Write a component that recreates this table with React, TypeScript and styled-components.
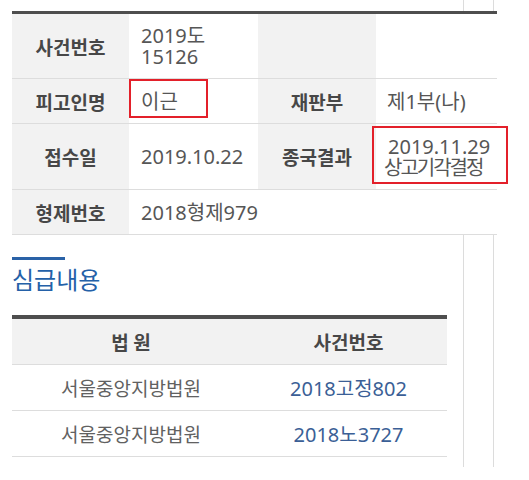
import React from "react";
import styled, { createGlobalStyle } from "styled-components";

const GlobalStyle = createGlobalStyle`
  html, body { margin: 0; padding: 0; background: #ffffff; }
  body {
    font-family: "Noto Sans", "Noto Sans CJK KR", sans-serif;
    color: #555;
  }
`;

const Page = styled.div`
  width: 529px;
  height: 480px;
  overflow: hidden;
  background: #fff;
`;

const TopStrip = styled.div`
  display: flex;
  justify-content: flex-end;
  padding-right: 35px;
  height: 11px;
`;

const SideRail = styled.div<{ $h: number }>`
  width: 29px;
  height: ${(p) => p.$h}px;
  border-left: 1px solid #dcdcdc;
  border-right: 1px solid #dcdcdc;
`;

const InfoTable = styled.div`
  margin: 0 32px 0 12px;
  border-top: 3px solid #4e4e4e;
  display: grid;
  grid-template-columns: 117px 129px 118px 1fr;
`;

const Label = styled.div<{ $h: number }>`
  height: ${(p) => p.$h}px;
  box-sizing: border-box;
  background: #f2f2f2;
  border-bottom: 1px solid #dddddd;
  display: flex;
  align-items: center;
  justify-content: center;
  font-family: "Noto Sans CJK KR", sans-serif;
  font-size: 19px;
  font-weight: 700;
  color: #474747;
`;

const Value = styled.div<{ $h: number; $span?: number; $pad?: number }>`
  position: relative;
  height: ${(p) => p.$h}px;
  box-sizing: border-box;
  background: #fff;
  border-bottom: 1px solid #dddddd;
  display: flex;
  align-items: center;
  padding-left: ${(p) => p.$pad ?? 12}px;
  font-size: 20px;
  line-height: 21px;
  color: #565656;
  white-space: nowrap;
  grid-column: span ${(p) => p.$span ?? 1};
`;

const Lines = styled.div`
  display: flex;
  flex-direction: column;
`;

const Line = styled.span<{ $tight?: boolean; $indent?: number }>`
  letter-spacing: ${(p) => (p.$tight ? "-2px" : "0")};
  padding-left: ${(p) => p.$indent ?? 0}px;
`;

const Highlight = styled.div<{ $l: number; $t: number; $w: number; $h: number }>`
  position: absolute;
  left: ${(p) => p.$l}px;
  top: ${(p) => p.$t}px;
  width: ${(p) => p.$w}px;
  height: ${(p) => p.$h}px;
  box-sizing: border-box;
  border: 2px solid #e3202a;
  pointer-events: none;
`;

const Lower = styled.div`
  display: flex;
  justify-content: space-between;
  padding: 0 35px 0 12px;
`;

const Section = styled.div`
  width: 435px;
  padding-top: 22px;
`;

const TitleBar = styled.div`
  width: 53px;
  height: 3px;
  background: #2a62a7;
`;

const Title = styled.h2`
  margin: 3px 0 0;
  font-family: "Noto Sans CJK KR", sans-serif;
  font-size: 24px;
  line-height: 32px;
  font-weight: 400;
  color: #2461a8;
`;

const CourtTable = styled.div`
  margin-top: 20px;
  border-top: 4px solid #4e4e4e;
  display: grid;
  grid-template-columns: 238px 1fr;
`;

const HeadCell = styled.div`
  height: 46px;
  box-sizing: border-box;
  background: #f2f2f2;
  border-bottom: 1px solid #dddddd;
  display: flex;
  align-items: center;
  justify-content: center;
  font-family: "Noto Sans CJK KR", sans-serif;
  font-size: 19px;
  font-weight: 700;
  color: #474747;
  white-space: pre;
`;

const BodyCell = styled.div<{ $link?: boolean }>`
  height: 46px;
  box-sizing: border-box;
  border-bottom: 1px solid #dddddd;
  display: flex;
  align-items: center;
  justify-content: center;
  font-size: ${(p) => (p.$link ? 20 : 19)}px;
  color: ${(p) => (p.$link ? "#3b5f96" : "#616161")};
`;

const rows = [
  { court: "서울중앙지방법원", no: "2018고정802" },
  { court: "서울중앙지방법원", no: "2018노3727" },
];

export default function App() {
  return (
    <Page>
      <GlobalStyle />
      <TopStrip>
        <SideRail $h={11} />
      </TopStrip>
      <InfoTable>
        <Label $h={65}>사건번호</Label>
        <Value $h={65}>
          <Lines>
            <Line>2019도</Line>
            <Line>15126</Line>
          </Lines>
        </Value>
        <Label $h={65} />
        <Value $h={65} />

        <Label $h={45}>피고인명</Label>
        <Value $h={45}>
          이근
          <Highlight $l={0} $t={0} $w={79} $h={39} />
        </Value>
        <Label $h={45}>재판부</Label>
        <Value $h={45} $pad={11}>제1부(나)</Value>

        <Label $h={66}>접수일</Label>
        <Value $h={66}>2019.10.22</Value>
        <Label $h={66}>종국결과</Label>
        <Value $h={66} $pad={8}>
          <Lines>
            <Line $indent={4}>2019.11.29</Line>
            <Line $tight>상고기각결정</Line>
          </Lines>
          <Highlight $l={-4} $t={2} $w={136} $h={58} />
        </Value>

        <Label $h={45}>형제번호</Label>
        <Value $h={45} $span={3}>2018형제979</Value>
      </InfoTable>
      <Lower>
        <Section>
          <TitleBar />
          <Title>심급내용</Title>
          <CourtTable>
            <HeadCell>법 원</HeadCell>
            <HeadCell>사건번호</HeadCell>
            {rows.map((r) => (
              <React.Fragment key={r.no}>
                <BodyCell>{r.court}</BodyCell>
                <BodyCell $link>{r.no}</BodyCell>
              </React.Fragment>
            ))}
          </CourtTable>
        </Section>
        <SideRail $h={232} />
      </Lower>
    </Page>
  );
}
